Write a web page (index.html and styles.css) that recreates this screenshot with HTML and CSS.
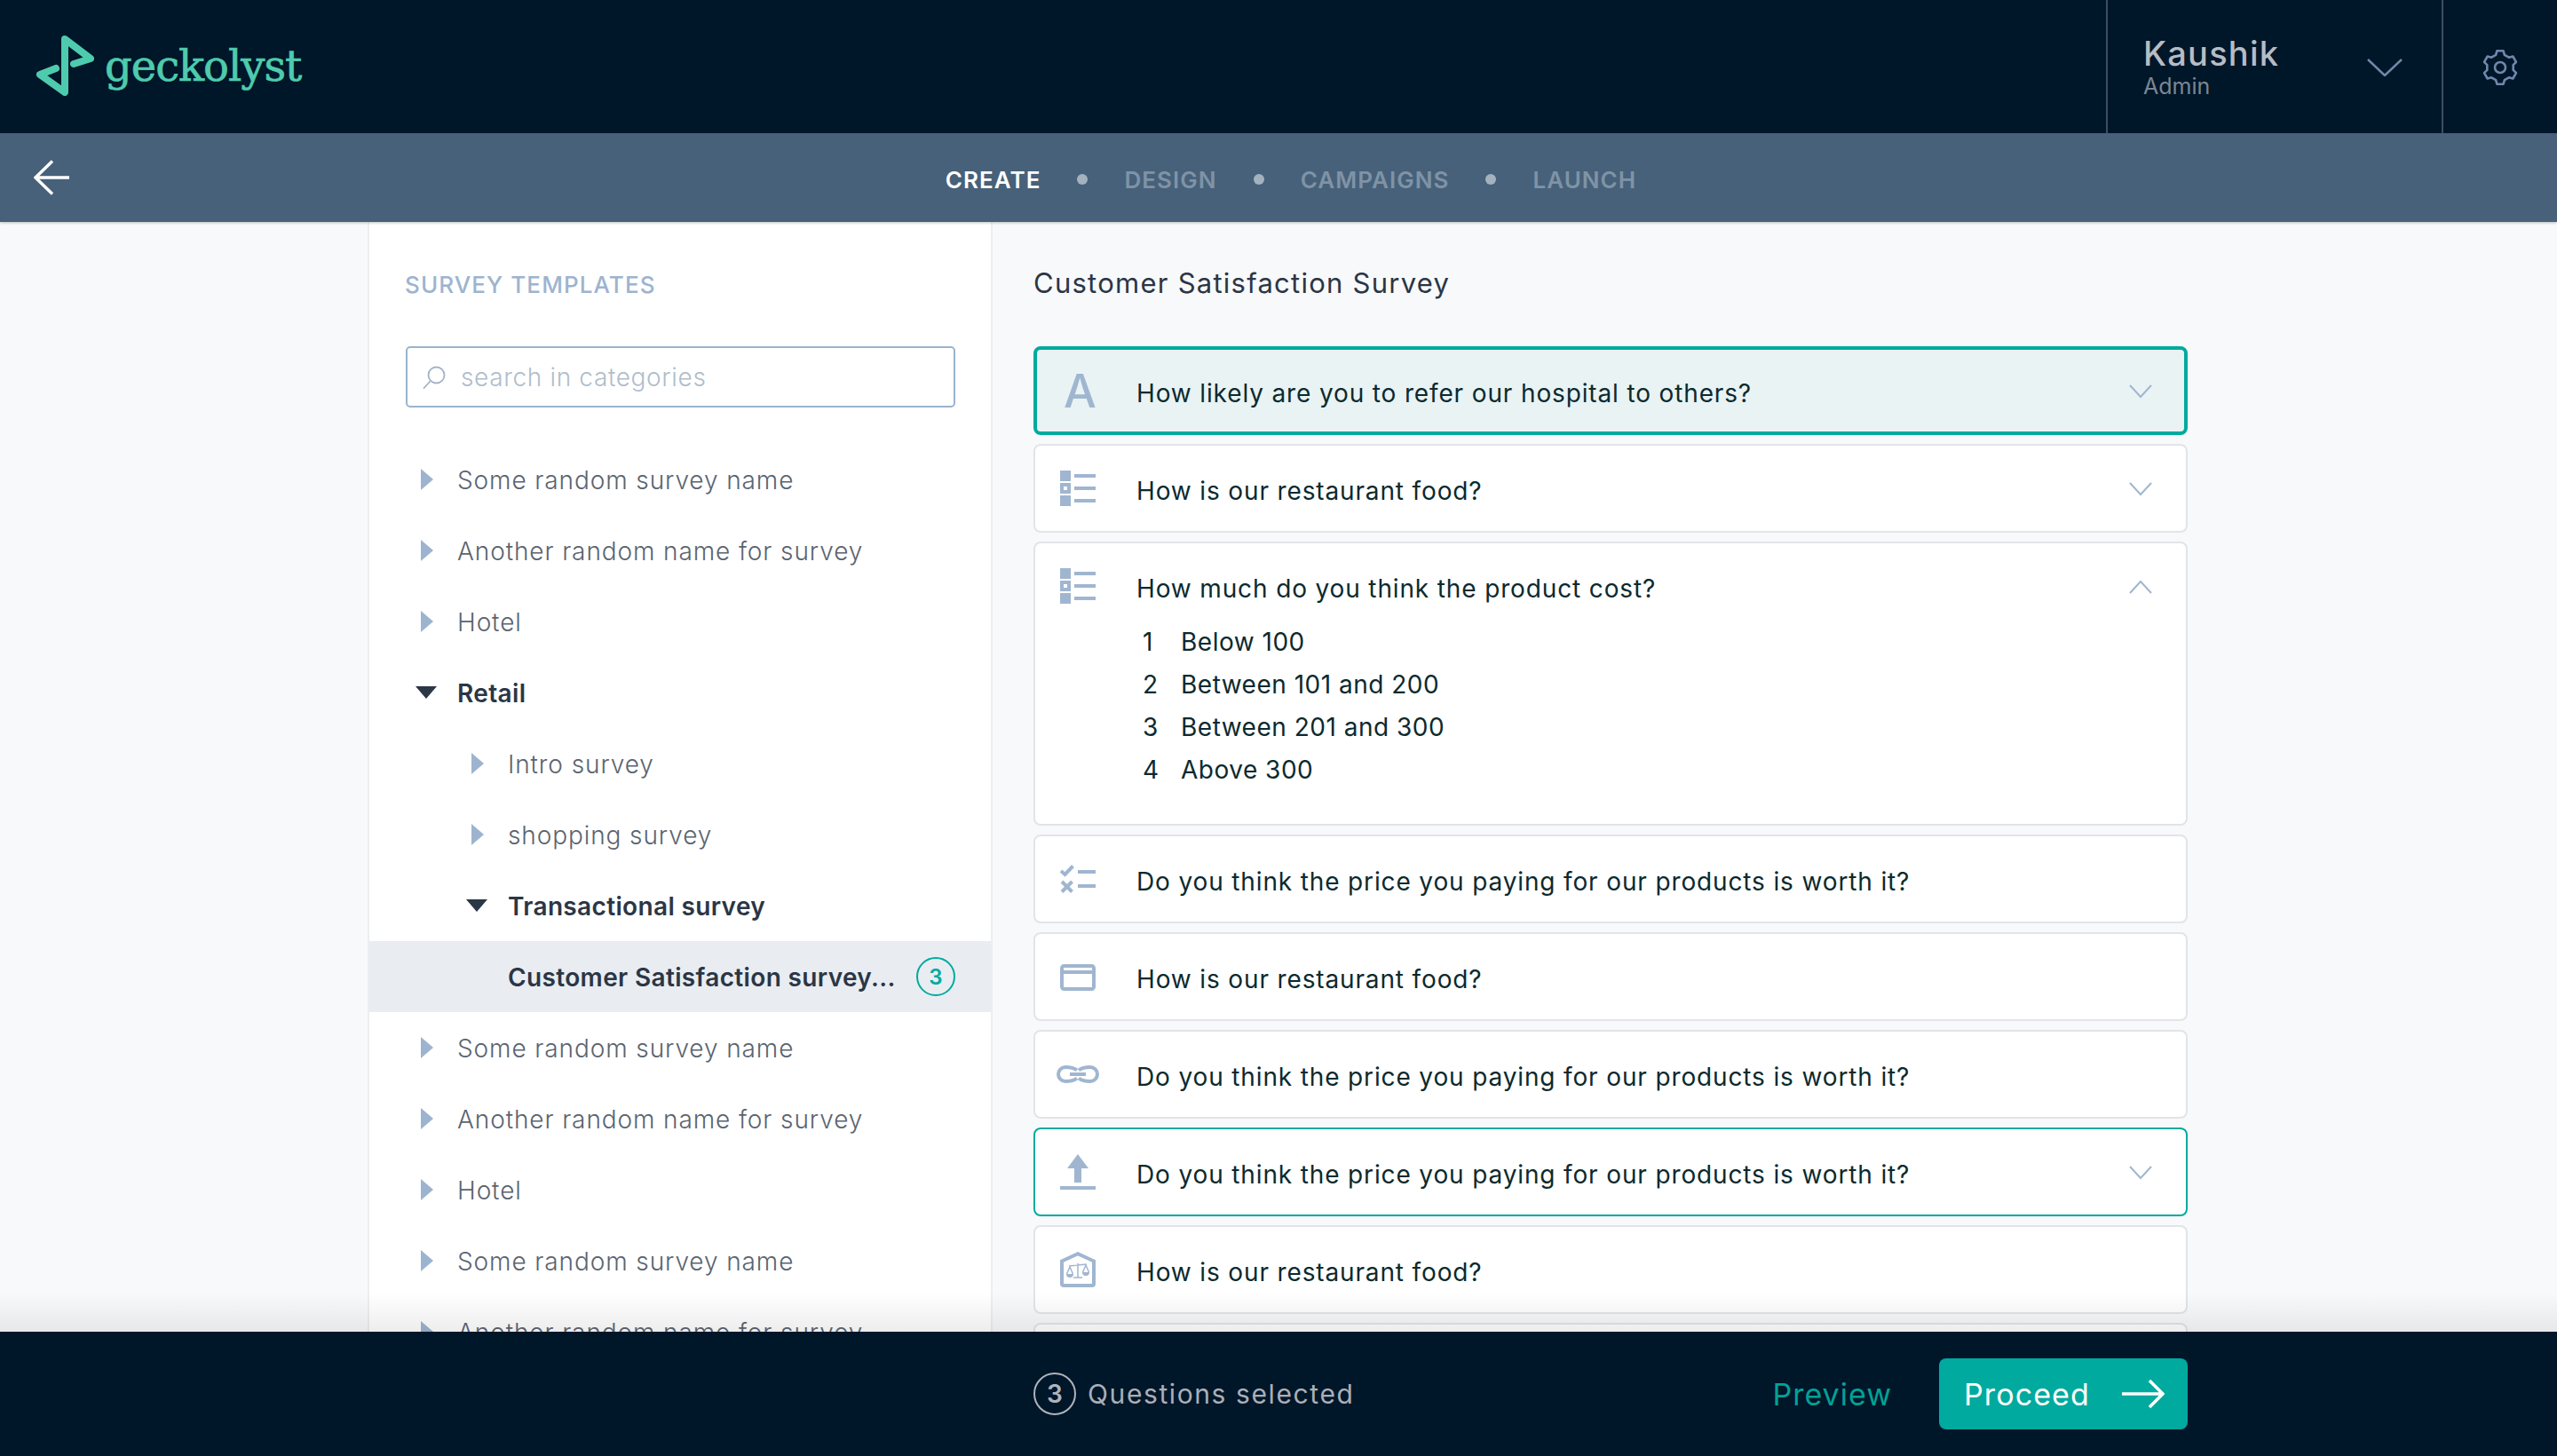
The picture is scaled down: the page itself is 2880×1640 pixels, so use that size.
FILE: index.html
```html
<!DOCTYPE html>
<html lang="en">
<head>
<meta charset="utf-8">
<title>Geckolyst</title>
<link rel="stylesheet" href="styles.css">
</head>
<body>
<svg class="sprite" aria-hidden="true">
  <symbol id="caret-r" viewBox="0 0 24 24"><polygon points="6,0 20,12 6,24"/></symbol>
  <symbol id="caret-d" viewBox="0 0 24 24"><polygon points="0,5 24,5 12,19"/></symbol>
  <symbol id="chev-d" viewBox="0 0 26 16"><path d="M1 1 L13 14 L25 1" fill="none" stroke="currentColor" stroke-width="2"/></symbol>
  <symbol id="chev-u" viewBox="0 0 26 16"><path d="M1 15 L13 2 L25 15" fill="none" stroke="currentColor" stroke-width="2"/></symbol>
  <symbol id="i-list" viewBox="0 0 40 40"><path fill-rule="evenodd" d="M0 0H12V12H0ZM0 14H12V26H0ZM4 18V22H8V18ZM0 28H12V40H0ZM16 4H40V8H16ZM16 18H40V22H16ZM16 32H40V36H16Z"/></symbol>
  <symbol id="i-check" viewBox="0 0 40 32"><path d="M1 7 L5.500 11 L14.500 1.500" fill="none" stroke="currentColor" stroke-width="4"/><path d="M2 19 L13.500 30.500 M13.500 19 L2 30.500" fill="none" stroke="currentColor" stroke-width="4"/><path d="M20 6H40V10H20ZM20 22H40V26H20Z"/></symbol>
  <symbol id="i-card" viewBox="0 0 40 30"><rect x="2" y="2" width="36" height="26" rx="2.500" fill="none" stroke="currentColor" stroke-width="4"/><rect x="2" y="7" width="36" height="4"/></symbol>
  <symbol id="i-link" viewBox="0 0 48 20"><path d="M23 5.500 C20 3 17 2 10 2 a8 8 0 0 0 0 16 C17 18 20 17 23 14.500 M25 5.500 C28 3 31 2 38 2 a8 8 0 0 1 0 16 C31 18 28 17 25 14.500 M15 10 H33" fill="none" stroke="currentColor" stroke-width="4"/></symbol>
  <symbol id="i-upload" viewBox="0 0 40 40"><path d="M20 0 L32 16 H24 V32 H16 V16 H8 Z M0 36 H40 V40 H0 Z"/></symbol>
  <symbol id="i-scale" viewBox="0 0 40 40"><path d="M2 10.500 L20 2.200 L38 10.500 V36 a2 2 0 0 1 -2 2 H4 a2 2 0 0 1 -2 -2 Z" fill="none" stroke="currentColor" stroke-width="4"/><path d="M10 16 L30 14 M20 13 V29 M15 29 H25 M11 17 L7.500 25 M11 17 L14.500 25 M29 15 L25.500 23 M29 15 L32.500 23" fill="none" stroke="currentColor" stroke-width="1.500"/><path d="M7 25 H15 a4 4 0 0 1 -8 0 Z M25 23 H33 a4 4 0 0 1 -8 0 Z"/></symbol>
</svg>

<header class="topbar">
  <a class="brand">
    <svg class="brand-mark" viewBox="0 0 66 68"><path d="M23 37 L5 44 L33 64 V4 L62 26 L43 32" fill="none" stroke="#4ecbad" stroke-width="8" stroke-linecap="round" stroke-linejoin="round"/></svg>
    <span class="brand-name">geckolyst</span>
  </a>
  <div class="user">
    <div class="user-text">
      <div class="user-name">Kaushik</div>
      <div class="user-role">Admin</div>
    </div>
    <svg class="user-chev" viewBox="0 0 40 20"><path d="M1 1 L20 19 L39 1" fill="none" stroke="#6f88a8" stroke-width="2.500"/></svg>
  </div>
  <div class="settings">
    <svg class="gear" viewBox="0 0 40 40"><path d="M15.100 5.800 L16.400 1.300 H23.600 L24.900 5.800 L29.800 8.700 L34.300 7.500 L38 13.800 L34.700 17.100 V22.900 L38 26.200 L34.300 32.500 L29.800 31.300 L24.900 34.200 L23.600 38.700 H16.400 L15.100 34.200 L10.200 31.300 L5.700 32.500 L2 26.200 L5.300 22.900 V17.100 L2 13.800 L5.700 7.500 L10.200 8.700 Z" fill="none" stroke="#6f88ad" stroke-width="2.600" stroke-linejoin="round"/><circle cx="20" cy="20" r="6" fill="none" stroke="#6f88ad" stroke-width="2.600"/></svg>
  </div>
</header>

<nav class="subnav">
  <svg class="back" viewBox="0 0 40 40"><path d="M21 1.500 L2 20 L21 38.500 M2 20 H40" fill="none" stroke="#fff" stroke-width="3.400"/></svg>
  <div class="steps">
    <span class="step step-on">CREATE</span><i class="dot"></i>
    <span class="step">DESIGN</span><i class="dot"></i>
    <span class="step">CAMPAIGNS</span><i class="dot"></i>
    <span class="step">LAUNCH</span>
  </div>
</nav>

<div class="content">
  <div class="wrap">
    <aside class="side">
      <h2 class="side-title">SURVEY TEMPLATES</h2>
      <label class="search">
        <svg class="search-ic" viewBox="0 0 26 26"><circle cx="15.500" cy="10.500" r="9" fill="none" stroke="#a3b3c6" stroke-width="1.800"/><path d="M9 17 L1 25.500" fill="none" stroke="#a3b3c6" stroke-width="1.800"/></svg>
        <span class="search-ph">search in categories</span>
      </label>
      <ul class="tree">
        <li class="row"><svg class="caret"><use href="#caret-r"/></svg><span class="row-t">Some random survey name</span></li>
        <li class="row"><svg class="caret"><use href="#caret-r"/></svg><span class="row-t">Another random name for survey</span></li>
        <li class="row"><svg class="caret"><use href="#caret-r"/></svg><span class="row-t">Hotel</span></li>
        <li class="row row-b"><svg class="caret caret-dark"><use href="#caret-d"/></svg><span class="row-t">Retail</span></li>
        <li class="row row-2"><svg class="caret"><use href="#caret-r"/></svg><span class="row-t">Intro survey</span></li>
        <li class="row row-2"><svg class="caret"><use href="#caret-r"/></svg><span class="row-t">shopping survey</span></li>
        <li class="row row-2 row-b"><svg class="caret caret-dark"><use href="#caret-d"/></svg><span class="row-t">Transactional survey</span></li>
        <li class="row row-2 row-b row-sel"><span class="caret"></span><span class="row-t">Customer Satisfaction survey...</span><span class="badge">3</span></li>
        <li class="row"><svg class="caret"><use href="#caret-r"/></svg><span class="row-t">Some random survey name</span></li>
        <li class="row"><svg class="caret"><use href="#caret-r"/></svg><span class="row-t">Another random name for survey</span></li>
        <li class="row"><svg class="caret"><use href="#caret-r"/></svg><span class="row-t">Hotel</span></li>
        <li class="row"><svg class="caret"><use href="#caret-r"/></svg><span class="row-t">Some random survey name</span></li>
        <li class="row"><svg class="caret"><use href="#caret-r"/></svg><span class="row-t">Another random name for survey</span></li>
      </ul>
    </aside>
    <main class="main">
      <h1 class="main-title">Customer Satisfaction Survey</h1>
      <div class="cards">
        <section class="card card-active">
          <div class="card-head"><span class="q-icon q-a">A</span><span class="q-text">How likely are you to refer our hospital to others?</span><svg class="chev"><use href="#chev-d"/></svg></div>
        </section>
        <section class="card">
          <div class="card-head"><span class="q-icon"><svg class="ic40"><use href="#i-list"/></svg></span><span class="q-text">How is our restaurant food?</span><svg class="chev"><use href="#chev-d"/></svg></div>
        </section>
        <section class="card card-open">
          <div class="card-head"><span class="q-icon"><svg class="ic40"><use href="#i-list"/></svg></span><span class="q-text">How much do you think the product cost?</span><svg class="chev"><use href="#chev-u"/></svg></div>
          <ol class="opts">
            <li class="opt"><span class="opt-n">1</span><span>Below 100</span></li>
            <li class="opt"><span class="opt-n">2</span><span>Between 101 and 200</span></li>
            <li class="opt"><span class="opt-n">3</span><span>Between 201 and 300</span></li>
            <li class="opt"><span class="opt-n">4</span><span>Above 300</span></li>
          </ol>
        </section>
        <section class="card">
          <div class="card-head"><span class="q-icon"><svg class="ic-check"><use href="#i-check"/></svg></span><span class="q-text">Do you think the price you paying for our products is worth it?</span></div>
        </section>
        <section class="card">
          <div class="card-head"><span class="q-icon"><svg class="ic-card"><use href="#i-card"/></svg></span><span class="q-text">How is our restaurant food?</span></div>
        </section>
        <section class="card">
          <div class="card-head"><span class="q-icon"><svg class="ic-link"><use href="#i-link"/></svg></span><span class="q-text">Do you think the price you paying for our products is worth it?</span></div>
        </section>
        <section class="card card-picked">
          <div class="card-head"><span class="q-icon"><svg class="ic40"><use href="#i-upload"/></svg></span><span class="q-text">Do you think the price you paying for our products is worth it?</span><svg class="chev"><use href="#chev-d"/></svg></div>
        </section>
        <section class="card">
          <div class="card-head"><span class="q-icon"><svg class="ic40"><use href="#i-scale"/></svg></span><span class="q-text">How is our restaurant food?</span></div>
        </section>
        <section class="card"><div class="card-head"></div></section>
      </div>
    </main>
  </div>
  <div class="fade"></div>
</div>

<footer class="footer">
  <div class="foot-in">
    <div class="count"><span class="count-n">3</span><span class="count-t">Questions selected</span></div>
    <span class="preview">Preview</span>
    <button class="proceed"><span>Proceed</span><svg class="proceed-ar" viewBox="0 0 48 34"><path d="M0 17 H46 M31 2 L46 17 L31 32" fill="none" stroke="#fff" stroke-width="3.600"/></svg></button>
  </div>
</footer>
</body>
</html>
```

FILE: styles.css
```css
* { box-sizing: border-box; }
html, body { margin: 0; padding: 0; }
body {
  width: 2880px; height: 1640px; overflow: hidden;
  display: flex; flex-direction: column;
  font-family: "Inter", "Liberation Sans", sans-serif;
  background: #f8f9fb; color: #0c2a2e;
}
.sprite { display: none; }

.topbar { flex: 0 0 150px; background: #001629; display: flex; align-items: stretch; }
.brand { display: flex; align-items: center; padding-left: 40px; gap: 12px; margin-right: auto; }
.brand-mark { width: 66px; height: 68px; margin-top: -2px; }
.brand-name { font-family: "DejaVu Serif", serif; font-size: 48px; color: #4ecbad; letter-spacing: -1px; margin-top: -2px; -webkit-text-stroke: 0.7px #4ecbad; }
.user { width: 380px; border-left: 2px solid #3b4f63; border-right: 2px solid #3b4f63; display: flex; align-items: center; padding-left: 40px; }
.user-text { width: 252px; }
.user-name { font-size: 38px; line-height: 42px; color: #b6bcc4; letter-spacing: 1.200px; font-weight: 500; }
.user-role { font-size: 25px; line-height: 28px; color: #7b8794; margin-top: 2px; }
.user-chev { width: 40px; height: 20px; margin-top: 1px; }
.settings { width: 128px; display: flex; align-items: center; justify-content: center; }
.gear { width: 40px; height: 40px; margin-top: 2px; }

.subnav { flex: 0 0 100px; background: #47617a; display: flex; align-items: center; box-shadow: 0 1px 3px rgba(0,0,0,.25); position: relative; z-index: 2; }
.back { width: 40px; height: 40px; margin-left: 38px; flex: none; margin-top: -1px; }
.steps { flex: 1; display: flex; align-items: center; justify-content: center; gap: 41px; padding-right: 50px; margin-top: 4px; }
.step { font-size: 26px; font-weight: 600; color: #7f93a6; letter-spacing: 1.050px; }
.step-on { color: #fff; }
.dot { width: 12px; height: 12px; border-radius: 50%; background: #a4b2bf; }

.content { flex: 1; position: relative; overflow: hidden; min-height: 0; }
.wrap { width: 2052px; margin: 0 auto; display: flex; height: 100%; }
.fade { position: absolute; left: 0; right: 0; bottom: 0; height: 44px; background: linear-gradient(rgba(0,0,0,0), rgba(0,0,0,.07)); pointer-events: none; }

.side { width: 704px; flex: none; background: #fff; border-left: 2px solid #eceef1; border-right: 2px solid #eceef1; margin-right: -2px; }
.side-title { margin: 56px 0 0 40px; font-size: 26px; line-height: 30px; font-weight: 500; color: #9db4cf; letter-spacing: 1.100px; }
.search { margin: 54px 40px 0 41px; height: 69px; border: 2px solid #9ab3cf; border-radius: 5px; display: flex; align-items: center; padding-left: 17px; gap: 17px; }
.search-ic { width: 26px; height: 26px; flex: none; }
.search-ph { font-size: 28px; color: #b0bdcb; font-weight: 300; letter-spacing: 0.650px; }
.tree { list-style: none; margin: 41px 0 0; padding: 0; }
.row { height: 80px; display: flex; align-items: center; padding: 0 40px 0 52px; font-size: 28px; font-weight: 300; color: #5a6470; letter-spacing: 0.900px; }
.row-2 { padding-left: 109px; }
.row-b { font-weight: 600; color: #2b3646; letter-spacing: 0.350px; }
.row-sel { background: #e9edf1; }
.caret { width: 24px; height: 24px; flex: none; margin-right: 23px; fill: #9db4d0; }
.caret-dark { fill: #2b3646; }
.row-t { flex: 1; white-space: nowrap; padding-top: 2px; }
.badge { width: 44px; height: 44px; border: 2px solid #00aa9e; border-radius: 50%; color: #00aa9e; font-size: 24px; font-weight: 600; display: flex; align-items: center; justify-content: center; letter-spacing: 0; }

.main { flex: 1; padding-left: 48px; padding-right: 2px; }
.main-title { margin: 49px 0 0; font-size: 31px; line-height: 40px; font-weight: 400; color: #2b3646; letter-spacing: 1.250px; }
.cards { margin-top: 51px; display: flex; flex-direction: column; gap: 10px; }
.card { background: #fff; border: 2px solid #e2e4e8; border-radius: 8px; flex: none; }
.card-head { height: 96px; display: flex; align-items: center; }
.card-active { background: #e9f3f4; border: 4px solid #00aa9e; }
.card-active .card-head { height: 92px; margin-left: -2px; margin-right: -2px; }
.card-picked { border-color: #00aa9e; }
.card-open { height: 320px; }
.q-icon { width: 114px; flex: none; padding-left: 28px; display: flex; align-items: center; color: #a0b6d0; fill: #a0b6d0; }
.q-a { font-size: 52px; font-weight: 500; padding-left: 32px; }
.ic40 { width: 40px; height: 40px; }
.ic-check { width: 40px; height: 32px; margin-top: -1px; }
.ic-card { width: 40px; height: 30px; margin-top: 2px; }
.ic-link { width: 48px; height: 20px; margin-left: -4px; }
.q-text { flex: 1; font-size: 28px; font-weight: 400; color: #0c2a2e; white-space: nowrap; padding-top: 6px; letter-spacing: 0.860px; }
.chev { width: 26px; height: 16px; flex: none; margin-right: 38px; margin-top: 2px; color: #a0b6d0; }
.opts { list-style: none; margin: -9px 0 0; padding: 0 0 0 114px; font-size: 28px; color: #0c2a2e; font-weight: 400; letter-spacing: 0.500px; }
.opt { height: 48px; display: flex; align-items: center; }
.opt-n { width: 50px; padding-left: 7px; }

.footer { flex: 0 0 140px; background: #001629; position: relative; z-index: 2; }
.foot-in { width: 2052px; margin: 0 auto; height: 100%; display: flex; align-items: center; padding-left: 750px; padding-right: 2px; }
.count { display: flex; align-items: center; gap: 13px; margin-right: auto; }
.count-n { width: 48px; height: 48px; border: 2px solid #aeb4bc; border-radius: 50%; color: #aeb4bc; font-size: 28px; font-weight: 600; display: flex; align-items: center; justify-content: center; }
.count-t { font-size: 30px; color: #aaafb8; letter-spacing: 1.600px; }
.preview { font-size: 34px; color: #00a296; font-weight: 400; margin-right: 53px; letter-spacing: 1px; }
.proceed { width: 280px; height: 80px; border: 0; border-radius: 8px; background: #00aa9e; color: #fff; font: 400 34px "Inter", sans-serif; letter-spacing: 1.100px; display: flex; align-items: center; justify-content: space-between; padding: 0 26px 0 28px; }
.proceed-ar { width: 48px; height: 34px; }
```
